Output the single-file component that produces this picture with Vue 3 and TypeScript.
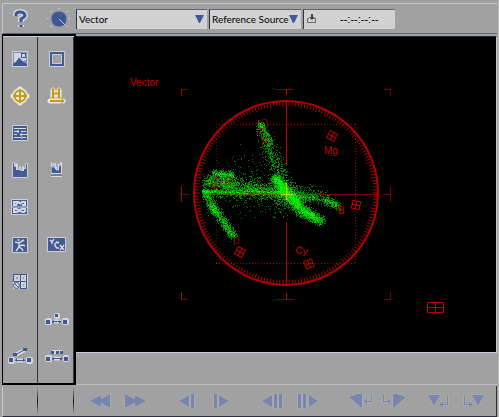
<script setup lang="ts">
import { ref } from 'vue'

type Shape = { d: string; c: string }
type Tool = { label: string; shapes: Shape[] }

const channel = ref('Vector')
const source = ref('Reference Source')
const timecode = ref('--:--:--:--')

const tile: Shape = { d: 'M4.500 4.500H19.500V19.500H4.500Z', c: 'tile' }

const tools: (Tool | null)[] = [
  {
    label: 'Picture',
    shapes: [
      { d: 'M4.500 4.500H19.500V19.500H4.500Z', c: 'tile soft' },
      { d: 'M6 6H18V13L15 14L11 10L8 15L6 16Z', c: 'pale' },
      { d: 'M5 17L8 15L11 11L15 15L19 17V19H5Z', c: 'navy' },
      { d: 'M13 6H18V11H13Z', c: 'navy' },
      { d: 'M14 7H17V10H14Z', c: 'pale' },
    ],
  },
  {
    label: 'Full frame',
    shapes: [
      { d: 'M4.500 4.500H19.500V19.500H4.500Z', c: 'tile' },
      { d: 'M7.500 7.500H16.500V16.500H7.500Z', c: 'inset' },
    ],
  },
  {
    label: 'Vectorscope',
    shapes: [
      { d: 'M12 6.500A5.500 5.500 0 1 1 12 17.500A5.500 5.500 0 1 1 12 6.500M12 5V19M5 12H19', c: 'halo wide' },
      { d: 'M12 6.500A5.500 5.500 0 1 1 12 17.500A5.500 5.500 0 1 1 12 6.500M12 5V19M5 12H19', c: 'gold' },
    ],
  },
  {
    label: 'Horizontal sweep',
    shapes: [
      { d: 'M8 6V14M14 6V14M8 10H14M5 17H18', c: 'halo wide' },
      { d: 'M8 5V14M14 5V14M8 9.500H14M5 17H18', c: 'gold' },
      { d: 'M6 5H10M12 5H16M6 14H10M12 14H16M16 14L19 17L16 20', c: 'gold thin' },
    ],
  },
  {
    label: 'Status',
    shapes: [
      tile,
      { d: 'M6 7.500H18M6 10.500H11M13 10.500H18M6 13.500H9M12 13.500H19M6 16.500H13M15 16.500H18', c: 'line' },
      { d: 'M10 9V12M13 12V15M14 15V18', c: 'line' },
    ],
  },
  null,
  {
    label: 'Waveform',
    shapes: [
      {
        d: 'M4.500 19.500V4.500H6.500V8.500H7.500V5.500H9.500V11.500H11.500V8.500H12.500V12.500H14.500V8.500H15.500V10.500H17.500V5.500H19.500V19.500Z',
        c: 'tile',
      },
      { d: 'M8.500 6V12M15.500 9V13', c: 'line' },
    ],
  },
  {
    label: 'Waveform strip',
    shapes: [
      { d: 'M6 6H17V15H6Z', c: 'softblue' },
      { d: 'M7 15V9L9 10L11 12L13 11L15 8H16V15Z', c: 'navy' },
      { d: 'M6.500 4V8H8.500V5.500H10.500V11M11.500 9V12H13.500V6.500H15.500V4.500H16.500V15M6 15.500H17M6 18.500H17', c: 'line' },
      { d: 'M6 17H17', c: 'navyline' },
    ],
  },
  {
    label: 'Eye pattern',
    shapes: [
      { d: 'M3.500 4.500H19.500V19.500H3.500Z', c: 'tile' },
      { d: 'M6 7H10L8 10H6ZM12 9L14 7H17V10H14M10 7L13 9', c: 'bold' },
      { d: 'M6 14H9L11 16L9 17H6ZM17 17H14L11 15L14 14H17V17', c: 'bold' },
      { d: 'M4 12H19', c: 'line' },
    ],
  },
  null,
  {
    label: 'Jitter',
    shapes: [
      tile,
      { d: 'M10.500 6V8M7 9L11 10L16 7M11 9V14L8 18M11 13L15 12M11 14L14 16L15 18M15 12L17 13', c: 'bold slim' },
    ],
  },
  {
    label: 'Component levels',
    shapes: [
      { d: 'M2.500 4.500H20.500V18.500H2.500Z', c: 'tile' },
      { d: 'M5 7L7 9L9 6M7 9V11M14 10L12 9L10 11V13L12 15H14M15 12L19 17M19 12L15 17', c: 'bold slim' },
    ],
  },
  {
    label: 'Four tiles',
    shapes: [
      { d: 'M5 4H20V19H5Z', c: 'bright' },
      { d: 'M5 4.500H19M5 11.500H19M5.500 4V11M12.500 4V19M18.500 4V19M12 18.500H19', c: 'navyline' },
      { d: 'M8.500 12.500A3 3 0 1 1 8.500 18.500A3 3 0 1 1 8.500 12.500M6 13L11 18', c: 'navyline' },
      { d: 'M7.500 6.500H10.500V9.500H7.500ZM14.500 6.500H16.500V9.500H14.500ZM14.500 13.500H16.500V16.500H14.500Z', c: 'inset' },
    ],
  },
  null,
  null,
  {
    label: 'Single link',
    shapes: [
      { d: 'M2 13H5V16H2ZM19 13H22V16H19ZM8 14.500H16M11 8H13V10H11Z', c: 'halo' },
      { d: 'M1 13H5V17H1ZM18 13H22V17H18ZM10 7H13V10H10ZM7 15L9 13V17ZM16 15L14 13V17Z', c: 'navy' },
      { d: 'M7 14.500H16', c: 'navyline' },
    ],
  },
  {
    label: 'Open link',
    shapes: [
      { d: 'M2 15H5V18H2ZM20 15H23V18H20ZM7 16.500H17M7 11L17 6', c: 'halo' },
      { d: 'M1 14H5V18H1ZM19 14H23V18H19ZM5 9H9V12H5ZM15 4H19V7H15ZM7 16L9 14V18ZM17 16L15 14V18Z', c: 'navy' },
      { d: 'M7 16.500H17M8 10.500L17 5.500', c: 'navyline' },
    ],
  },
  {
    label: 'Multiple links',
    shapes: [
      { d: 'M2 13H5V16H2ZM20 13H22V16H20ZM8 14.500H16M7 8H17', c: 'halo' },
      { d: 'M1 13H5V17H1ZM19 13H23V17H19ZM6 7H9V10H6ZM11 7H14V10H11ZM15 7H18V10H15ZM7 15L9 13V17ZM17 15L15 13V17Z', c: 'navy' },
      { d: 'M7 14.500H17', c: 'navyline' },
    ],
  },
]

const transport: { label: string; d: string }[][] = [
  [
    { label: 'Rewind', d: 'M1 8L12 2V6L21 1V15L12 10V14Z' },
    { label: 'Fast forward', d: 'M23 8L12 2V6L2 1V15L12 10V14Z' },
  ],
  [
    { label: 'Step back', d: 'M4 8L14 2V14ZM16 1H19V15H16Z' },
    { label: 'Step forward', d: 'M20 8L10 2V14ZM5 1H8V15H5Z' },
  ],
  [
    { label: 'Field back', d: 'M1 8L11 2V14ZM13 1H16V15H13ZM18 1H21V15H18Z' },
    { label: 'Field forward', d: 'M23 8L14 2V14ZM3 1H6V15H3ZM8 1H11V15H8Z' },
  ],
  [
    { label: 'Go to previous mark', d: 'M2 4L10 1H15V15L9 10ZM24 1H25V9H20V11L17 8L20 6V8H24Z' },
    { label: 'Go to next mark', d: 'M25 4L16 1H12V15L18 10ZM2 1H3V8H7V6L10 8L7 11V9H2Z' },
  ],
]

const marks: { label: string; d: string }[] = [
  { label: 'Mark in', d: 'M1 2H13L7 13ZM20 2H21V12H16V14L12 11L16 9V11H20Z' },
  { label: 'Mark out', d: 'M23 2H11L17 13ZM3 2H4V11H8V9L12 11L8 14V12H3Z' },
]

// Deterministic generator so the trace is the same on every load.
let seed = 20117
function rand(): number {
  seed = (seed * 1664525 + 1013904223) % 4294967296
  return seed / 4294967296
}
function gauss(): number {
  return rand() + rand() + rand() + rand() - 2
}

const hits = new Map<string, number>()
function streak(x1: number, y1: number, x2: number, y2: number, n: number, s1: number, s2: number) {
  for (let i = 0; i < n; i++) {
    const t = rand()
    const s = s1 + (s2 - s1) * t
    const x = Math.round(x1 + (x2 - x1) * t + gauss() * s)
    const y = Math.round(y1 + (y2 - y1) * t + gauss() * s)
    if (x < -84) continue
    const key = `${x} ${y}`
    hits.set(key, (hits.get(key) ?? 0) + 1)
  }
}

streak(-26, -71, -24, -65, 130, 3, 4)
streak(-24, -66, -18, -50, 200, 4, 5)
streak(-19, -52, -4, -14, 360, 6, 8)
streak(-74, -21, -54, -19, 330, 3, 3)
streak(-82, -14, -55, -9, 420, 5, 5)
streak(-72, -14, -50, -12, 160, 6, 6)
streak(-55, -9, -6, -3, 420, 5, 5)
streak(-84, -3, 0, -1, 800, 2, 3)
streak(-82, 0, -6, 0, 260, 5, 6)
streak(-60, -14, -8, -5, 260, 10, 10)
streak(-50, -30, -8, -10, 90, 22, 20)
streak(-55, 9, -5, 10, 60, 14, 9)
streak(-82, -3, -72, 16, 300, 4, 4)
streak(-74, 12, -52, 43, 620, 4, 4)
streak(-12, -17, 0, -3, 800, 4, 6)
streak(0, -3, 12, 11, 700, 6, 5)
streak(-5, -4, 5, 4, 400, 10, 10)
streak(8, 8, 20, 20, 500, 5, 5)
streak(18, 17, 35, 27, 660, 5, 4)
streak(3, 1, 30, 3, 340, 5, 4)
streak(24, 2, 40, 5, 90, 6, 6)
streak(38, 5, 52, 12, 240, 4, 3)
streak(-10, 12, 4, 14, 50, 10, 10)
streak(4, -7, 32, -2, 60, 9, 6)

const greens = ['#007000', '#009800', '#00b400', '#00cc00', '#10ec10']
const trace = greens.map((color, level) => {
  let d = ''
  hits.forEach((n, key) => {
    if (Math.min(n, greens.length) - 1 === level) d += `M${key}h1v1h-1z`
  })
  return { color, d }
})

let ticks = ''
for (let a = 0; a < 360; a += 2) {
  const r = (a * Math.PI) / 180
  const inner = a % 10 === 0 ? 86 : 87
  ticks += `M${(Math.cos(r) * 91).toFixed(1)} ${(Math.sin(r) * 91).toFixed(1)}L${(Math.cos(r) * inner).toFixed(1)} ${(Math.sin(r) * inner).toFixed(1)}`
}

const targets = [
  { x: 46, y: -58, a: 27 },
  { x: 70, y: 11, a: 12 },
  { x: 23, y: 70, a: -22 },
  { x: -46, y: 58, a: 30 },
]
</script>

<template>
  <div class="console">
    <header class="toolbar">
      <button class="help" type="button" aria-label="Help">
        <svg width="24" height="24" viewBox="0 0 24 24">
          <path class="q-halo" d="M8 9V8Q8 5 12 5T17 8Q17 10 13 12V15M13 18V20" />
          <path class="q-mark" d="M8 9V8Q8 5 12 5T17 8Q17 10 13 12V15M13 18V20" />
        </svg>
      </button>
      <button class="dial" type="button" aria-label="Adjust">
        <svg width="24" height="24" viewBox="0 0 24 24">
          <circle cx="14" cy="12" r="8" class="knob" />
          <path d="M14 12L20 18" class="pointer" />
          <path d="M14 1v1M6 4v1M22 4v1M3 11v1M24 11v1M6 19v1M22 19v1" class="dots" />
        </svg>
      </button>
      <div class="field wide">
        <select v-model="channel" aria-label="Display">
          <option>Vector</option>
        </select>
        <svg class="arrow" width="9" height="8" viewBox="0 0 9 8"><path d="M0 0H9L5 8H4Z" /></svg>
      </div>
      <div class="field">
        <select v-model="source" aria-label="Reference">
          <option>Reference Source</option>
        </select>
        <svg class="arrow" width="9" height="8" viewBox="0 0 9 8"><path d="M0 0H9L5 8H4Z" /></svg>
      </div>
      <div class="field time">
        <svg class="grab" width="10" height="10" viewBox="0 0 10 10">
          <path d="M4 0H6V3H8L5 6L2 3H4Z" />
          <path class="tray" d="M2 4.500H.5V8.500H8.500V4.500H7" />
        </svg>
        <input v-model="timecode" type="text" aria-label="Timecode" />
      </div>
    </header>

    <div class="workspace">
      <nav class="tools" aria-label="Measurement tools">
        <div v-for="(tool, i) in tools" :key="i" class="cell">
          <button v-if="tool" type="button" :aria-label="tool.label">
            <svg width="24" height="24" viewBox="0 0 24 24">
              <path v-for="(s, j) in tool.shapes" :key="j" :d="s.d" :class="s.c" />
            </svg>
          </button>
        </div>
      </nav>

      <main class="main">
        <div class="display">
          <svg class="scope" viewBox="-210 -157 420 315" role="img" aria-label="Vector">
            <g class="graticule">
              <path class="dim" d="M-105 -104.500H-98M98 -104.500H105M-105 105.500H-98M98 105.500H105M-8 -104.500H8M-8 105.500H8M-105 .5H-97M97 .5H105M104.500 -105V-98M104.500 98V105M104.500 -8V8" />
              <path class="lit" d="M-104.500 -105V-98M-104.500 98V105M-104.500 -8V8M.5 -105V-99M.5 99V105" />
              <path class="dotted" d="M-70 -69.500H69M-70 69.500H69M69.500 -70V70" />
              <path class="dotted faint" d="M-69.500 -70V70" />
              <path class="dim" d="M0 .5H92" />
              <path class="lit" d="M.5 -94V-28M.5 28V92" />
            </g>
            <path class="ticks" :d="ticks" transform="translate(0 -1)" />
            <circle class="ring" cx="0" cy="-1" r="92" />
            <g shape-rendering="crispEdges">
              <path v-for="t in trace" :key="t.color" :d="t.d" :fill="t.color" />
            </g>
            <path class="olive" d="M-82 .5H0" />
            <path class="yellow" d="M.5 -11V6M-5 .5H6" />
            <path
              v-for="(t, i) in targets"
              :key="i"
              class="target"
              d="M-4 -4H4V4H-4ZM0 -4V4M-4 0H4"
              :transform="`translate(${t.x} ${t.y}) rotate(${t.a})`"
            />
            <path class="target hit" d="M-27 -73L-20 -75L-18 -67L-26 -65ZM-74 -15H-65V-6H-74ZM-70 -15V-6M-74 -10H-65" />
            <path class="target hit" d="M-23 -56H-19V-52H-23ZM-60 -17H-55V-12H-60ZM-52 44H-47V49H-52Z" />
            <path class="target" d="M141.500 108.500H157.500V118.500H141.500ZM149.500 108V119M141 113.500H158" />
            <text x="-156" y="-108">Vector</text>
            <text x="38" y="-40">Mg</text>
            <text x="52" y="20">B</text>
            <text x="9" y="59" transform="rotate(8 9 59)">Cy</text>
          </svg>
        </div>
        <div class="strip"></div>
      </main>
    </div>

    <footer class="transport">
      <div class="slot"></div>
      <div class="slot"></div>
      <div class="groups">
        <div class="cluster">
          <div v-for="(group, i) in transport" :key="i" class="pair">
            <button v-for="b in group" :key="b.label" type="button" disabled :aria-label="b.label">
              <svg width="24" height="16" viewBox="0 0 24 16"><path :d="b.d" /></svg>
            </button>
          </div>
        </div>
        <div class="pair">
          <button v-for="b in marks" :key="b.label" type="button" disabled :aria-label="b.label">
            <svg width="24" height="16" viewBox="0 0 24 16"><path :d="b.d" /></svg>
          </button>
        </div>
      </div>
    </footer>
  </div>
</template>

<style>
body {
  background: #a1a1a1;
}
</style>

<style scoped>
.console {
  box-sizing: border-box;
  min-height: 100vh;
  display: flex;
  flex-direction: column;
  padding: 3px 1px 1px 2px;
  background: #a1a1a1;
  border-right: 1px solid #bcbcbc;
  font-family: "Liberation Sans", Arial, sans-serif;
  font-size: 10px;
  color: #000;
}
svg {
  display: block;
  overflow: visible;
}
button {
  display: flex;
  align-items: center;
  justify-content: center;
  margin: 0;
  padding: 0;
  border: 0;
  background: none;
}
.toolbar {
  box-sizing: border-box;
  height: 31px;
  display: flex;
  align-items: center;
  gap: 2px;
  border-top: 1px solid #c3c7d0;
  border-left: 1px solid #c3c7d0;
  border-bottom: 1px solid #62626e;
}
.help,
.dial {
  flex: none;
  width: 34px;
  height: 28px;
}
.dial {
  width: 35px;
}
.q-halo,
.q-mark {
  fill: none;
  stroke: #d5d8e2;
  stroke-width: 6;
}
.q-mark {
  stroke: #3f5690;
  stroke-width: 3;
}
.knob {
  fill: #3f5894;
  stroke: #8b96b0;
}
.pointer {
  stroke: #c5cad8;
  stroke-width: 1;
}
.dots {
  stroke: #f0f0f0;
  stroke-width: 1;
}
.field {
  box-sizing: border-box;
  flex: 0 1 92px;
  min-width: 0;
  height: 20px;
  display: flex;
  align-items: center;
  background: #d2d2d2;
  border-top: 1px solid #62626e;
  border-left: 1px solid #2b3448;
  padding-right: 3px;
}
.field.wide {
  flex-basis: 131px;
}
.field select,
.field input {
  flex: 1;
  min-width: 0;
  width: 0;
  height: 19px;
  margin: 0;
  padding: 0 0 0 2px;
  border: 0;
  background: transparent;
  appearance: none;
  font-family: Lato, "Liberation Sans", sans-serif;
  font-size: 10px;
  color: inherit;
}
.field input {
  padding-left: 23px;
  font-family: "Liberation Sans", Arial, sans-serif;
  font-size: 11px;
}
.arrow {
  flex: none;
  pointer-events: none;
  fill: #3f5896;
}
.grab {
  flex: none;
  margin-left: 3px;
  fill: #444;
}
.tray {
  fill: none;
  stroke: #666;
}
.workspace {
  flex: 1;
  display: flex;
  margin-bottom: 1px;
}
.tools {
  box-sizing: border-box;
  flex: none;
  width: 74px;
  display: grid;
  grid-template-columns: 34px 35px;
  grid-auto-rows: 1fr;
  column-gap: 2px;
  border: solid #000;
  border-width: 2px 2px 2px 1px;
  background: linear-gradient(90deg, #a1a1a1 34px, #2b3448 34px, #2b3448 35px, #a1a1a1 35px, #a1a1a1 70px, #2b3448 70px);
  padding: 4px 0 8px;
  box-shadow: inset 0 1px 0 #c3cdda;
}
.cell {
  display: flex;
  align-items: center;
  justify-content: center;
}
.tile {
  fill: #445a94;
  stroke: #cdd0d8;
}
.soft {
  fill: #7f91ba;
}
.softblue {
  fill: #9aa9c8;
}
.pale {
  fill: #d4d8e4;
}
.navy {
  fill: #3f5894;
}
.inset {
  fill: #a1a1a1;
  stroke: #c9ccd4;
}
.bright {
  fill: #d4d6dc;
}
.halo {
  fill: none;
  stroke: #d6d8dd;
  stroke-width: 4;
  stroke-linejoin: round;
}
.halo.wide {
  stroke: #eceae0;
  stroke-width: 5;
  stroke-linecap: round;
}
.gold {
  fill: none;
  stroke: #c29a1c;
  stroke-width: 2;
}
.gold.thin {
  stroke-width: 1;
}
.line {
  fill: none;
  stroke: #dadde6;
}
.bold {
  fill: none;
  stroke: #d4d8e2;
  stroke-width: 2;
}
.bold.slim {
  stroke-width: 1.5;
}
.navyline {
  fill: none;
  stroke: #3f5894;
}
.main {
  flex: 1;
  min-width: 0;
  display: flex;
  flex-direction: column;
  padding-top: 2px;
}
.display {
  flex: 1;
  display: flex;
  background: #000;
  border-top: 1px solid #20283c;
  border-right: 1px solid #c3c7d0;
  border-bottom: 1px solid #c3cdda;
}
.scope {
  flex: 1;
  min-width: 0;
  overflow: hidden;
}
.graticule {
  shape-rendering: crispEdges;
}
.graticule path,
.ticks,
.ring,
.target,
.olive,
.yellow {
  fill: none;
  stroke: #b40000;
  stroke-width: 1;
}
.graticule .dim {
  stroke: #780000;
}
.graticule .dotted {
  stroke: #a00000;
  stroke-dasharray: 1 2;
}
.graticule .faint {
  stroke: #600000;
}
.ticks {
  stroke: #a80000;
}
.ring {
  stroke: #b00000;
  stroke-width: 2;
}
.target {
  stroke: #c00000;
}
.hit {
  opacity: 0.65;
}
.olive {
  stroke: #706000;
  opacity: 0.7;
}
.yellow {
  stroke: #d0d000;
}
.scope text {
  fill: #c80000;
  font-size: 10px;
}
.strip {
  height: 31px;
  border-bottom: 1px solid #bcbec4;
}
.transport {
  box-sizing: border-box;
  height: 31px;
  display: flex;
  border-left: 1px solid #c3cdda;
  border-right: 1px solid #2b3040;
  border-bottom: 1px solid #2b3040;
}
.slot {
  box-sizing: border-box;
  flex: none;
  width: 35px;
  margin: 2px 0;
  border-right: 1px solid;
  border-image: linear-gradient(#a1a1a1, #111 50%, #a1a1a1) 1;
  border-width: 0 1px 0 0;
}
.slot + .slot {
  width: 36px;
}
.groups {
  flex: 1;
  min-width: 0;
  display: flex;
  align-items: center;
  gap: 12px;
  padding-left: 10px;
}
.cluster {
  display: flex;
  gap: 18px;
}
.pair {
  display: flex;
}
.pair button {
  width: 34px;
  height: 24px;
}
.pair path {
  fill: #7886ab;
  stroke: #aeb3be;
  stroke-width: 1;
  paint-order: stroke;
}
</style>
